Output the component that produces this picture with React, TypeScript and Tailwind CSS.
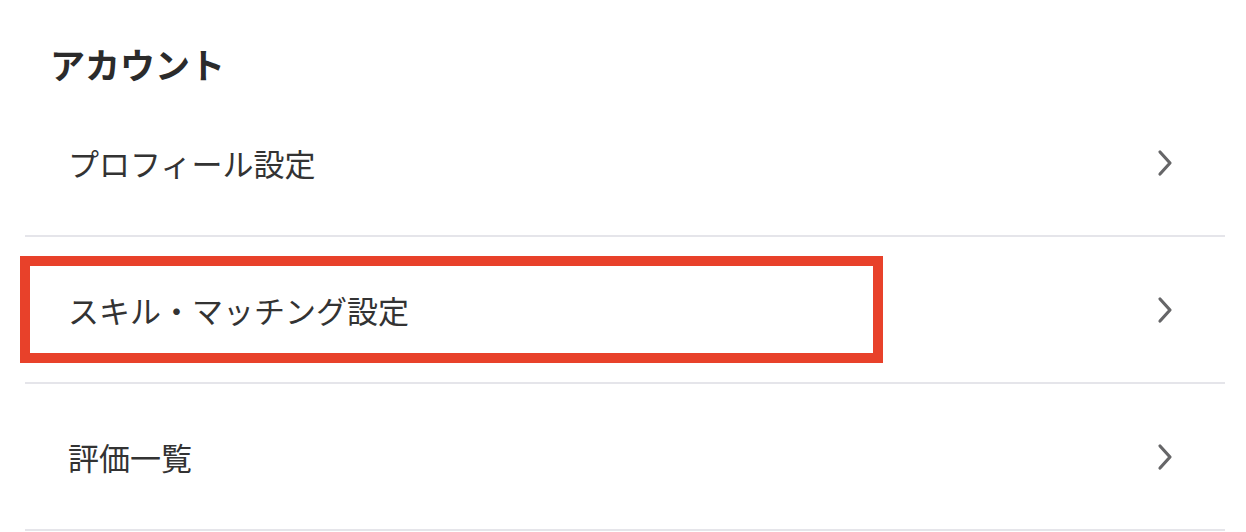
import React from "react";

const Chevron = () => (
  <svg width="16" height="28" viewBox="0 0 16 28" fill="none" className="shrink-0">
    <path d="M3 3 L13 14 L3 25" stroke="#666668" strokeWidth="3.2" strokeLinecap="round" strokeLinejoin="round" />
  </svg>
);

const Row = ({ label }: { label: string }) => (
  <div className="flex h-[147px] items-center justify-between border-b-2 border-[#e5e5ea] pl-[43px] pr-[52px]">
    <span className="text-[31px] leading-none text-[#333333]">{label}</span>
    <Chevron />
  </div>
);

export default function App() {
  return (
    <div
      className="relative min-h-[532px] w-[1246px] bg-white"
      style={{ fontFamily: '"Noto Sans CJK JP", "Noto Sans", sans-serif' }}
    >
      <div className="flex h-[90px] items-center pl-[50px] pt-[36px]">
        <h1 className="text-[35px] font-bold leading-none text-[#2b2b2b]">アカウント</h1>
      </div>
      <div className="pl-[25px] pr-[21px]">
        <Row label="プロフィール設定" />
        <Row label="スキル・マッチング設定" />
        <Row label="評価一覧" />
      </div>
      <div className="pointer-events-none absolute left-[20px] top-[256px] h-[107px] w-[863px] border-[10px] border-[#e8412a]" />
    </div>
  );
}
